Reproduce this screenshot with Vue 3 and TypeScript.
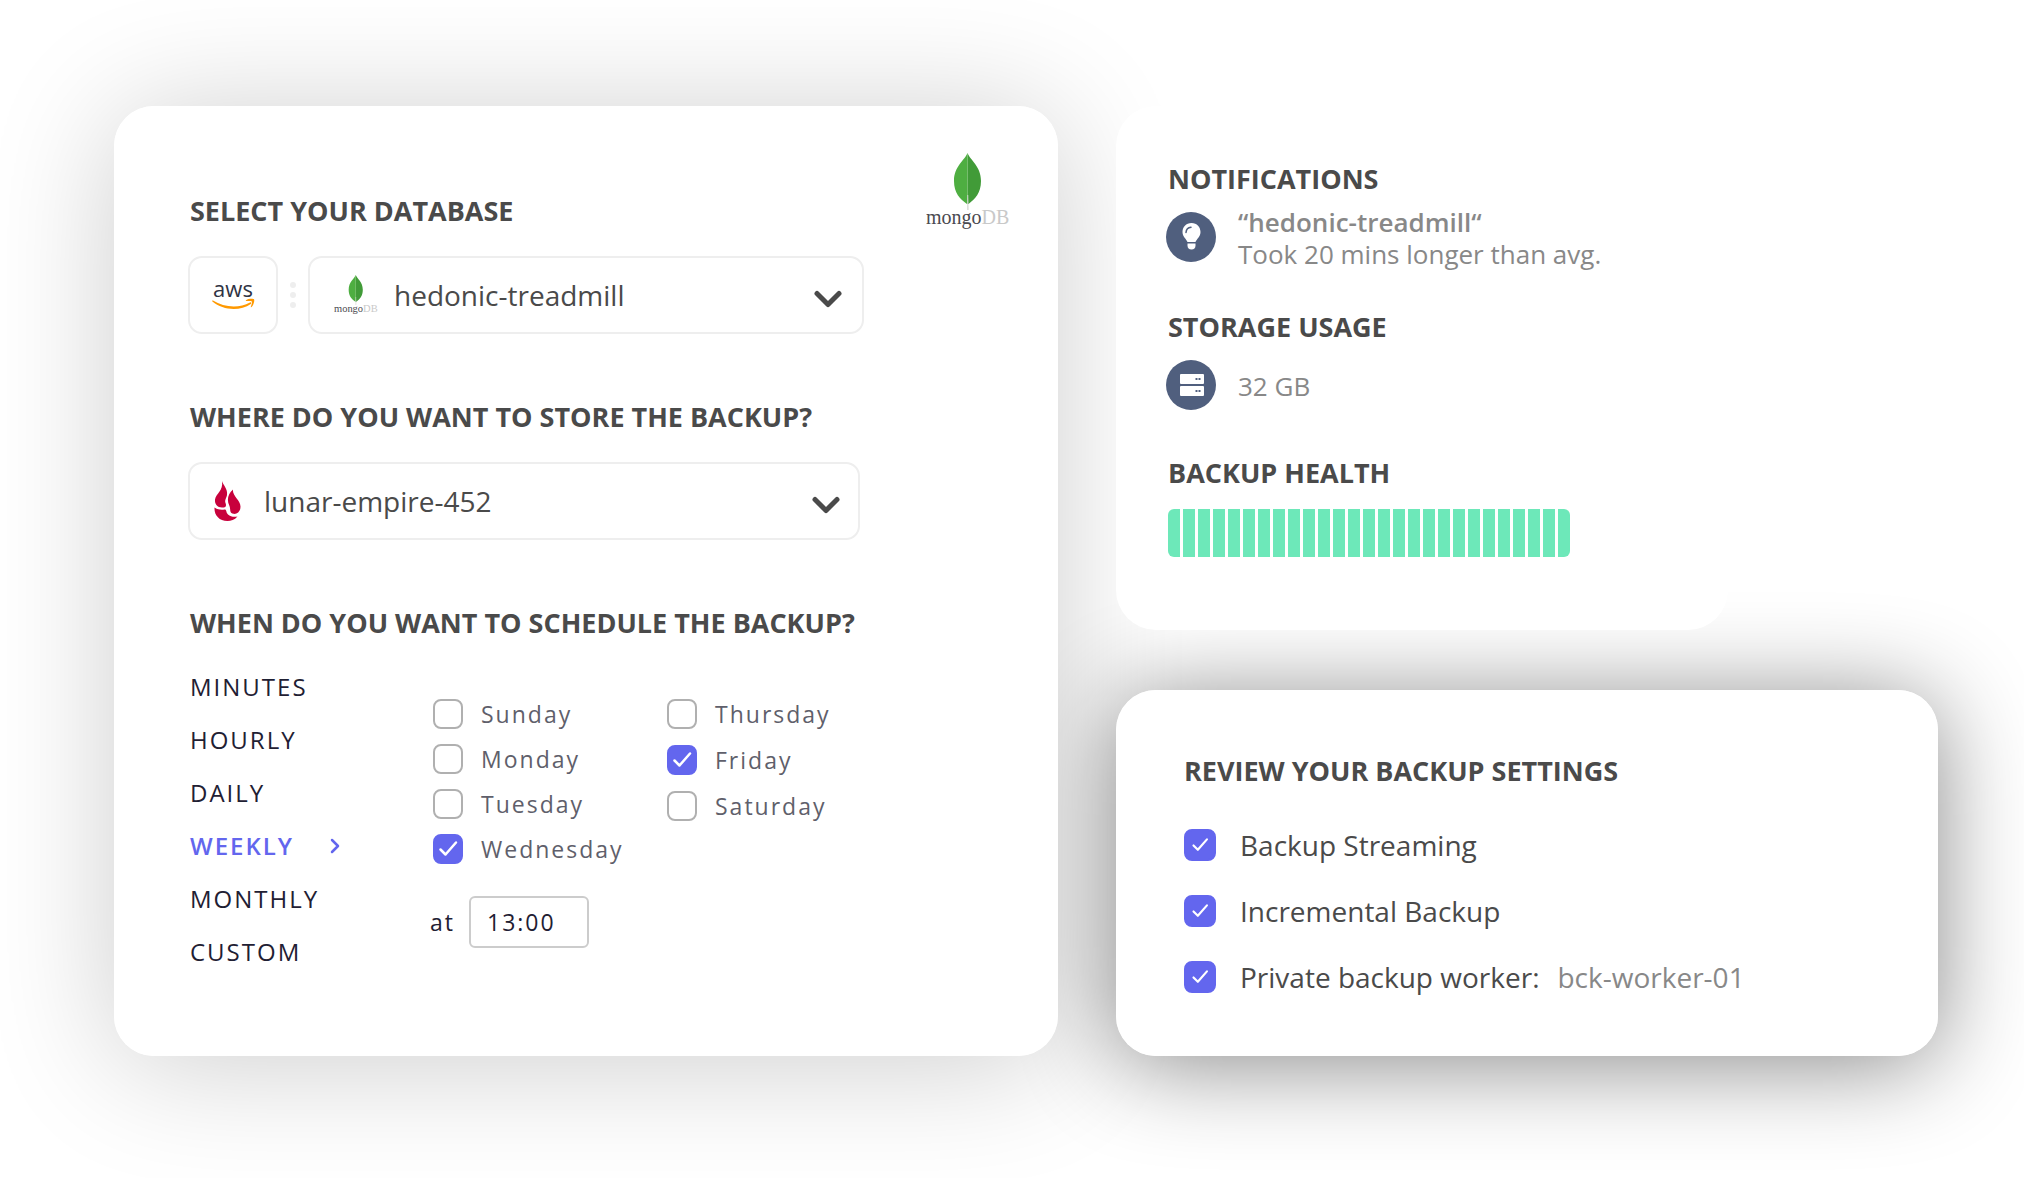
<script setup lang="ts">
import { reactive, ref } from 'vue'

interface Option {
  label: string
  checked: boolean
}

const database = ref('hedonic-treadmill')
const storage = ref('lunar-empire-452')
const time = ref('13:00')

const cadences = ['MINUTES', 'HOURLY', 'DAILY', 'WEEKLY', 'MONTHLY', 'CUSTOM']
const cadence = ref('WEEKLY')

const firstDays = reactive<Option[]>([
  { label: 'Sunday', checked: false },
  { label: 'Monday', checked: false },
  { label: 'Tuesday', checked: false },
  { label: 'Wednesday', checked: true },
])
const lastDays = reactive<Option[]>([
  { label: 'Thursday', checked: false },
  { label: 'Friday', checked: true },
  { label: 'Saturday', checked: false },
])

const settings = reactive([
  { label: 'Backup Streaming', value: '', checked: true },
  { label: 'Incremental Backup', value: '', checked: true },
  { label: 'Private backup worker:', value: 'bck-worker-01', checked: true },
])

const healthBars = 27
</script>

<template>
  <main class="page">
    <section class="card setup">
      <header class="head">
        <h2><label for="database">SELECT YOUR DATABASE</label></h2>
        <svg class="mongo" viewBox="0 0 84 78" role="img" aria-label="MongoDB">
          <path d="M41.500 0C44 7 55 13 55 28C55 40 49 46 42.500 51L41.500 51Z" fill="#419b38" />
          <path d="M41.500 0C39 7 28 13 28 28C28 40 34 46 41 51L41.500 51Z" fill="#4eae41" />
          <path d="M41.300 42L42.200 42L42.600 57L41.200 57Z" fill="#d6d8d4" />
          <text x="0" y="71" font-family="Liberation Serif, serif" font-size="20" fill="#4a4a50">mongo<tspan fill="#c9c9c9">DB</tspan></text>
        </svg>
      </header>
      <div class="row">
        <button class="box provider" type="button" aria-label="Amazon Web Services">
          <svg width="44" height="44" viewBox="0 0 44 44">
            <text x="22" y="24" text-anchor="middle" font-family="Open Sans, sans-serif" font-weight="500" font-size="22" fill="#2f3344">aws</text>
            <path d="M2 27.500C13 34.500 28 35.500 39 29.500C40 29 40.800 30 39.800 30.900C29 38.500 12 37.500 1.400 28.500C.9 28 1.300 27.200 2 27.500Z" fill="#f90" />
            <path d="M35 27.300C37.500 25.400 42.500 25.600 43.100 26.400C43.700 27.200 42.800 31.800 40.500 34.100C40 34.500 39.500 34.200 39.800 33.700C40.500 31.800 41.300 29.300 40.800 28.500C40.200 27.700 37.300 28 35.600 28.100C34.900 28.200 34.500 27.700 35 27.300Z" fill="#f90" />
          </svg>
        </button>
        <span class="dots" aria-hidden="true"><i /><i /><i /></span>
        <div class="box picker">
          <svg class="mongo-small" viewBox="0 0 84 78" aria-hidden="true">
            <path d="M41.500 0C44 7 55 13 55 28C55 40 49 46 42.500 51L41.500 51Z" fill="#419b38" />
            <path d="M41.500 0C39 7 28 13 28 28C28 40 34 46 41 51L41.500 51Z" fill="#4eae41" />
            <path d="M41.300 42L42.200 42L42.600 57L41.200 57Z" fill="#d6d8d4" />
            <text x="0" y="71" font-family="Liberation Serif, serif" font-size="20" fill="#4a4a50">mongo<tspan fill="#c9c9c9">DB</tspan></text>
          </svg>
          <select id="database" v-model="database">
            <option>hedonic-treadmill</option>
          </select>
          <svg class="chevron" viewBox="0 0 28 18" aria-hidden="true">
            <path d="M3 3.500L14 14.500L25 3.500" />
          </svg>
        </div>
      </div>

      <h2 class="title"><label for="storage">WHERE DO YOU WANT TO STORE THE BACKUP?</label></h2>
      <div class="box picker storage">
        <svg class="flame" viewBox="0 0 27 40" aria-hidden="true">
          <path d="M8 0C9 4 14 8 13 14C12.300 17.500 10.500 19 11.500 22C13 25.500 11 27 8 26.500C3.500 26.500 .5 23 1 18.500C1.800 12.500 9.500 10 8 0Z" fill="#c8013c" />
          <path d="M19 8.500C18 15 26.500 19 26.500 25.500C26.500 31 22.500 33.500 19.500 32.800C15 32 17 28.500 15.300 24.500C12.500 19 14 12.500 19 8.500Z" fill="#c8013c" />
          <path d="M.5 26.500C3 28.500 6.500 29 10.500 28.500C13 28.500 11.500 31 14 33.500C16.500 36 20.500 36 23.500 35.500C20.500 39 17 40 13.500 40C5 40 0 34 .5 26.500Z" fill="#c8013c" />
        </svg>
        <select id="storage" v-model="storage">
          <option>lunar-empire-452</option>
        </select>
        <svg class="chevron" viewBox="0 0 28 18" aria-hidden="true">
          <path d="M3 3.500L14 14.500L25 3.500" />
        </svg>
      </div>

      <h2 class="title">WHEN DO YOU WANT TO SCHEDULE THE BACKUP?</h2>
      <div class="schedule">
        <ul class="cadences">
          <li v-for="item in cadences" :key="item">
            <button type="button" :class="{ active: item === cadence }" @click="cadence = item">
              {{ item }}
              <svg v-if="item === cadence" width="10" height="16" viewBox="0 0 10 16" aria-hidden="true">
                <path d="M2 2L8 8L2 14" fill="none" stroke="#6366ee" stroke-width="2.500" stroke-linecap="round" stroke-linejoin="round" />
              </svg>
            </button>
          </li>
        </ul>
        <div class="when">
          <div class="days">
            <div class="first">
              <label v-for="day in firstDays" :key="day.label" class="day">
                <input v-model="day.checked" type="checkbox" />{{ day.label }}
              </label>
            </div>
            <div class="last">
              <label v-for="day in lastDays" :key="day.label" class="day">
                <input v-model="day.checked" type="checkbox" />{{ day.label }}
              </label>
            </div>
          </div>
          <div class="time">
            <label for="time">at</label>
            <input id="time" v-model="time" type="text" />
          </div>
        </div>
      </div>
    </section>

    <div class="side">
      <section class="card status">
        <h2>NOTIFICATIONS</h2>
        <div class="info">
          <svg class="disc" viewBox="0 0 50 50" aria-hidden="true">
            <circle cx="25" cy="25" r="25" fill="#505f7e" />
            <path d="M25.500 11C31 11 34.500 15 34.500 20C34.500 25 30.500 27 29.500 30H21.500C20.500 27 16.500 25 16.500 20C16.500 15 20 11 25.500 11Z" fill="#fff" />
            <path d="M21.500 31.500H29.500V33.500C29.500 36 28 37.500 25.500 37.500C23 37.500 21.500 36 21.500 33.500Z" fill="#fff" />
            <path d="M20 20.500C20.200 17.500 22 15.500 25 15.200" fill="none" stroke="#505f7e" stroke-width="1.500" stroke-linecap="round" />
          </svg>
          <p><strong>“hedonic-treadmill“</strong><br />Took 20 mins longer than avg.</p>
        </div>
        <h2 class="usage">STORAGE USAGE</h2>
        <div class="info">
          <svg class="disc" viewBox="0 0 50 50" aria-hidden="true">
            <circle cx="25" cy="25" r="25" fill="#505f7e" />
            <rect x="14" y="14" width="24" height="10" rx="1" fill="#fff" />
            <rect x="14" y="26" width="24" height="10" rx="1" fill="#fff" />
            <path d="M29.500 18h2v2h-2zM32.500 18h2v2h-2zM29.500 30h2v2h-2zM32.500 30h2v2h-2z" fill="#505f7e" />
          </svg>
          <p>32 GB</p>
        </div>
        <h2 class="health-title">BACKUP HEALTH</h2>
        <div class="health" role="img" aria-label="Backup health">
          <i v-for="n in healthBars" :key="n" />
        </div>
      </section>

      <section class="card review">
        <h2>REVIEW YOUR BACKUP SETTINGS</h2>
        <label v-for="item in settings" :key="item.label" class="setting">
          <input v-model="item.checked" type="checkbox" />
          <span>{{ item.label }}</span>
          <span v-if="item.value" class="value">{{ item.value }}</span>
        </label>
      </section>
    </div>
  </main>
</template>

<style>
body {
  margin: 0;
  background: #fff;
}
</style>

<style scoped>
* {
  box-sizing: border-box;
}
.page {
  position: relative;
  z-index: 0;
  display: grid;
  grid-template-columns: 944fr 822fr;
  gap: 58px;
  min-height: 100vh;
  padding: 106px 86px 122px 114px;
  overflow: hidden;
  color: #4a4a4a;
  font-family: "Open Sans", sans-serif;
  font-size: 28px;
}
h2,
p,
ul {
  margin: 0;
  padding: 0;
}
h2 {
  font-size: 27px;
  font-weight: 700;
  line-height: 32px;
}
button,
select,
input {
  margin: 0;
  color: inherit;
  font: inherit;
}
.card {
  position: relative;
  background: #fff;
  border-radius: 40px;
}
.setup::before,
.review::before {
  content: "";
  position: absolute;
  inset: 0;
  z-index: -1;
  border-radius: 40px;
}
.setup::before {
  box-shadow: 0 8px 128px rgba(0, 0, 0, 0.2);
}
.review::before {
  box-shadow: 0 8px 96px rgba(0, 0, 0, 0.47);
}
.setup {
  padding: 47px 48px 78px 74px;
}
.setup h2,
.cadences {
  padding-left: 2px;
}
.head {
  display: flex;
  justify-content: space-between;
  margin-bottom: 25px;
}
.head h2 {
  padding-top: 42px;
}
.mongo {
  width: 84px;
  height: 78px;
}
.row {
  display: flex;
  align-items: center;
  max-width: 676px;
}
.box {
  height: 78px;
  background: #fff;
  border: 2px solid #eee;
  border-radius: 14px;
}
.provider {
  display: flex;
  align-items: center;
  justify-content: center;
  width: 90px;
  padding: 0;
}
.dots {
  display: flex;
  flex-direction: column;
  align-items: center;
  gap: 4px;
  width: 30px;
}
.dots i {
  width: 6px;
  height: 6px;
  background: #eee;
  border-radius: 50%;
}
.picker {
  display: flex;
  flex: 1;
  align-items: center;
  padding: 0 20px 0 24px;
}
.storage {
  max-width: 672px;
  padding-right: 18px;
}
.mongo-small {
  width: 44px;
  height: 41px;
  margin-right: 16px;
}
.flame {
  width: 27px;
  height: 40px;
  margin-right: 23px;
}
.picker select {
  flex: 1;
  min-width: 0;
  padding: 0;
  background: none;
  border: 0;
  appearance: none;
}
.chevron {
  width: 28px;
  height: 18px;
  margin-top: 8px;
  fill: none;
  stroke: #4a4a4a;
  stroke-width: 5px;
  stroke-linecap: round;
  stroke-linejoin: round;
}
.title {
  margin: 67px 0 29px;
}
.title + .schedule {
  margin-top: -8px;
}
.schedule {
  display: flex;
}
.cadences {
  width: 242px;
  color: #1f2033;
  font-size: 24px;
  letter-spacing: 2px;
  list-style: none;
}
.cadences li {
  height: 53px;
}
.cadences button {
  display: flex;
  align-items: center;
  gap: 36px;
  height: 53px;
  padding: 0;
  background: none;
  border: 0;
  letter-spacing: inherit;
}
.cadences .active {
  color: #6366ee;
  font-weight: 600;
}
.when {
  padding-top: 31px;
  color: #5f5f6b;
  font-size: 23px;
  letter-spacing: 2px;
}
.days {
  display: flex;
  padding-left: 3px;
}
.first {
  width: 234px;
}
.day {
  display: flex;
  align-items: center;
  gap: 18px;
  height: 45px;
}
.last .day {
  height: 46px;
}
input[type="checkbox"] {
  flex: none;
  width: 30px;
  height: 30px;
  background: #fff;
  border: 2px solid #b0b0b0;
  border-radius: 8px;
  appearance: none;
}
input[type="checkbox"]:checked {
  background: #6366ee url("data:image/svg+xml,%3Csvg xmlns='http://www.w3.org/2000/svg' viewBox='0 0 30 30'%3E%3Cpath d='M7.500 15.500L12.500 20.500L23 8.500' fill='none' stroke='white' stroke-width='2.500' stroke-linecap='round' stroke-linejoin='round'/%3E%3C/svg%3E") center / 30px 30px no-repeat;
  border-color: #6366ee;
}
.time {
  display: flex;
  align-items: center;
  gap: 14px;
  padding-top: 25px;
  color: #1f2033;
}
.time input {
  width: 120px;
  height: 52px;
  padding: 0 16px;
  background: #fff;
  border: 2px solid #ccc;
  border-radius: 6px;
  letter-spacing: inherit;
}
.side {
  display: flex;
  flex-direction: column;
  gap: 60px;
}
.status {
  width: 612px;
  max-width: 100%;
  padding: 57px 50px 73px;
}
.status h2,
.health {
  margin-left: 2px;
}
.info {
  display: flex;
  align-items: center;
  gap: 22px;
  height: 64px;
  margin-top: 10px;
  color: #888;
  font-size: 26px;
  line-height: 32px;
}
.info p {
  padding-top: 2px;
}
.info strong {
  font-weight: 600;
}
.disc {
  flex: none;
  width: 50px;
  height: 50px;
}
.usage {
  margin-top: 42px;
}
.health-title {
  margin-top: 40px;
}
.health {
  display: flex;
  gap: 3px;
  width: max-content;
  margin-top: 20px;
  overflow: hidden;
  border-radius: 6px;
}
.health i {
  width: 12px;
  height: 48px;
  background: #6de8b9;
}
.review {
  flex: 1;
  padding: 65px 68px 46px;
}
.review h2 {
  margin-bottom: 25px;
}
.setting {
  display: flex;
  align-items: center;
  height: 66px;
}
.setting input[type="checkbox"] {
  width: 32px;
  height: 32px;
  margin-right: 24px;
  background-size: 26px 26px;
}
.value {
  margin-left: 18px;
  color: #888;
}
</style>
